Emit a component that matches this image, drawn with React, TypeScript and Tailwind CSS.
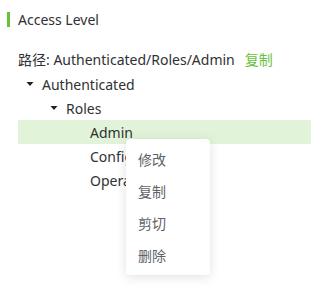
import React from "react";

const Caret = () => (
  <svg width="8" height="6" viewBox="0 0 8 6" className="block">
    <path d="M0.5 1 L7.5 1 L4 5 Z" fill="#222" />
  </svg>
);

type Row = { label: string; level: number; expanded?: boolean; active?: boolean };

const rows: Row[] = [
  { label: "Authenticated", level: 0, expanded: true },
  { label: "Roles", level: 1, expanded: true },
  { label: "Admin", level: 2, active: true },
  { label: "Configurator", level: 2 },
  { label: "Operator", level: 2 },
];

const menuItems = ["修改", "复制", "剪切", "删除"];

export default function App() {
  return (
    <div
      className="relative w-[311px] h-[294px] bg-white text-[14px] text-[#303133]"
      style={{ fontFamily: '"Noto Sans", "Noto Sans CJK SC", sans-serif' }}
    >
      {/* header */}
      <div className="flex items-center pl-[7px] pt-[12px] h-[27px]">
        <div className="w-[3px] h-[15px] bg-[#67c23a]" />
        <span className="ml-[8px] leading-[15px]">Access Level</span>
      </div>

      {/* path */}
      <div className="flex items-center pl-[18px] mt-[22px] h-[20px]">
        <span>路径: Authenticated/Roles/Admin</span>
        <span className="ml-[10px] text-[#67c23a]">复制</span>
      </div>

      {/* tree */}
      <div className="ml-[18px] mt-[3px]">
        {rows.map((r) => (
          <div
            key={r.label}
            className={
              "flex items-center h-[24px] " + (r.active ? "bg-[#e1f3d8]" : "")
            }
          >
            <div style={{ width: r.level * 24 }} />
            <div className="w-[24px] flex justify-center">
              {r.expanded ? <Caret /> : null}
            </div>
            <span className="whitespace-nowrap">{r.label}</span>
          </div>
        ))}
      </div>

      {/* context menu */}
      <div className="absolute left-[126px] top-[139px] w-[84px] py-[4px] bg-white rounded-[4px] shadow-[0_2px_12px_rgba(0,0,0,0.12)]">
        {menuItems.map((m) => (
          <div key={m} className="h-[32px] flex items-center pl-[12px] text-[#606266]">
            {m}
          </div>
        ))}
      </div>
    </div>
  );
}
